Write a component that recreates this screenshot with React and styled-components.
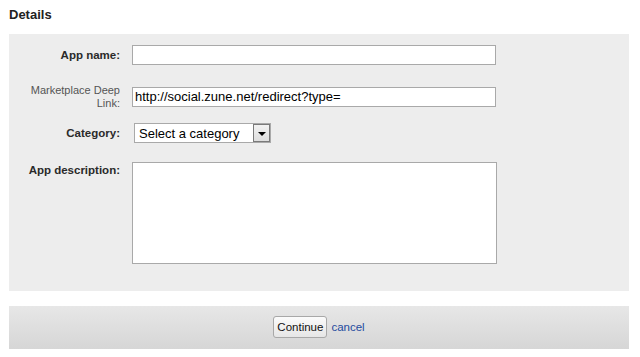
import React from "react";
import styled, { createGlobalStyle } from "styled-components";

const GlobalStyle = createGlobalStyle`
  body {
    margin: 0;
    background: #fff;
    font-family: "Liberation Sans", Arial, sans-serif;
  }
`;

const Page = styled.div`
  padding: 7px 11px 8px 9px;
`;

const Heading = styled.h2`
  margin: 0 0 12px;
  font-size: 13px;
  line-height: 15px;
  font-weight: bold;
  color: #222;
`;

const Panel = styled.div`
  background: #ededed;
  padding: 11px 0 27px;
`;

// rows are laid out by their control; a tall label just overflows around it
const FieldRow = styled.div`
  display: grid;
  grid-template-columns: 111px 1fr;
  column-gap: 12px;
  align-items: ${(p) => (p.top ? "start" : "center")};
  margin-top: ${(p) => p.gap || 0}px;
  height: ${(p) => (p.top ? "auto" : "20px")};
`;

const Label = styled.label`
  text-align: right;
  font-size: ${(p) => (p.light ? "11px" : "11.5px")};
  line-height: 13px;
  font-weight: ${(p) => (p.light ? "normal" : "bold")};
  color: ${(p) => (p.light ? "#555" : "#2a2a2a")};
  padding-top: ${(p) => (p.top ? "2px" : "1px")};
`;

const TextInput = styled.input`
  box-sizing: border-box;
  width: 364px;
  height: 20px;
  margin: 0;
  padding: 0 2px;
  border: 1px solid #a9a9a9;
  background: #fff;
  font-family: "Liberation Sans", Arial, sans-serif;
  font-size: 13px;
  color: #000;
  outline: none;
`;

const TextArea = styled.textarea`
  box-sizing: border-box;
  display: block;
  width: 365px;
  height: 102px;
  margin: 0;
  padding: 2px;
  border: 1px solid #a9a9a9;
  background: #fff;
  resize: none;
  outline: none;
  font-family: "Liberation Sans", Arial, sans-serif;
  font-size: 13px;
`;

const SelectBox = styled.div`
  box-sizing: border-box;
  margin-left: 2px;
  width: 137px;
  height: 20px;
  border: 1px solid #a9a9a9;
  background: #fff;
  display: flex;
  align-items: center;
  justify-content: space-between;
  padding-left: 4px;
  font-size: 13px;
  color: #000;
`;

const SelectArrow = styled.span`
  box-sizing: border-box;
  width: 17px;
  height: 18px;
  border: 1px solid #7a7a7a;
  background: linear-gradient(#f2f2f2, #dedede);
  display: flex;
  align-items: center;
  justify-content: center;

  &::after {
    content: "";
    border-left: 4px solid transparent;
    border-right: 4px solid transparent;
    border-top: 4px solid #000;
    margin-top: 1px;
  }
`;

const Footer = styled.div`
  margin-top: 15px;
  height: 42px;
  background: linear-gradient(#e7e7e7, #d6d6d6);
  display: flex;
  align-items: center;
  justify-content: center;
  gap: 4px;
  padding-bottom: 1px;
`;

const Button = styled.button`
  box-sizing: border-box;
  height: 22px;
  width: 54px;
  padding: 0;
  border: 1px solid #a8a8a8;
  border-radius: 3px;
  background: linear-gradient(#fbfbfb, #e6e6e6);
  font-family: "Liberation Sans", Arial, sans-serif;
  font-size: 11.5px;
  color: #111;
`;

const CancelLink = styled.a`
  font-size: 11.5px;
  color: #1f4b9e;
  text-decoration: none;
`;

export default function App() {
  return (
    <Page>
      <GlobalStyle />
      <Heading>Details</Heading>
      <Panel>
        <FieldRow>
          <Label>App name:</Label>
          <TextInput defaultValue="" />
        </FieldRow>
        <FieldRow gap={18}>
          <Label light>
            Marketplace Deep
            <br />
            Link:
          </Label>
          <TextInput defaultValue="http://social.zune.net/redirect?type=" />
        </FieldRow>
        <FieldRow gap={20}>
          <Label>Category:</Label>
          <SelectBox>
            <span>Select a category</span>
            <SelectArrow />
          </SelectBox>
        </FieldRow>
        <FieldRow gap={19} top>
          <Label top>App description:</Label>
          <TextArea />
        </FieldRow>
      </Panel>
      <Footer>
        <Button>Continue</Button>
        <CancelLink href="#">cancel</CancelLink>
      </Footer>
    </Page>
  );
}
